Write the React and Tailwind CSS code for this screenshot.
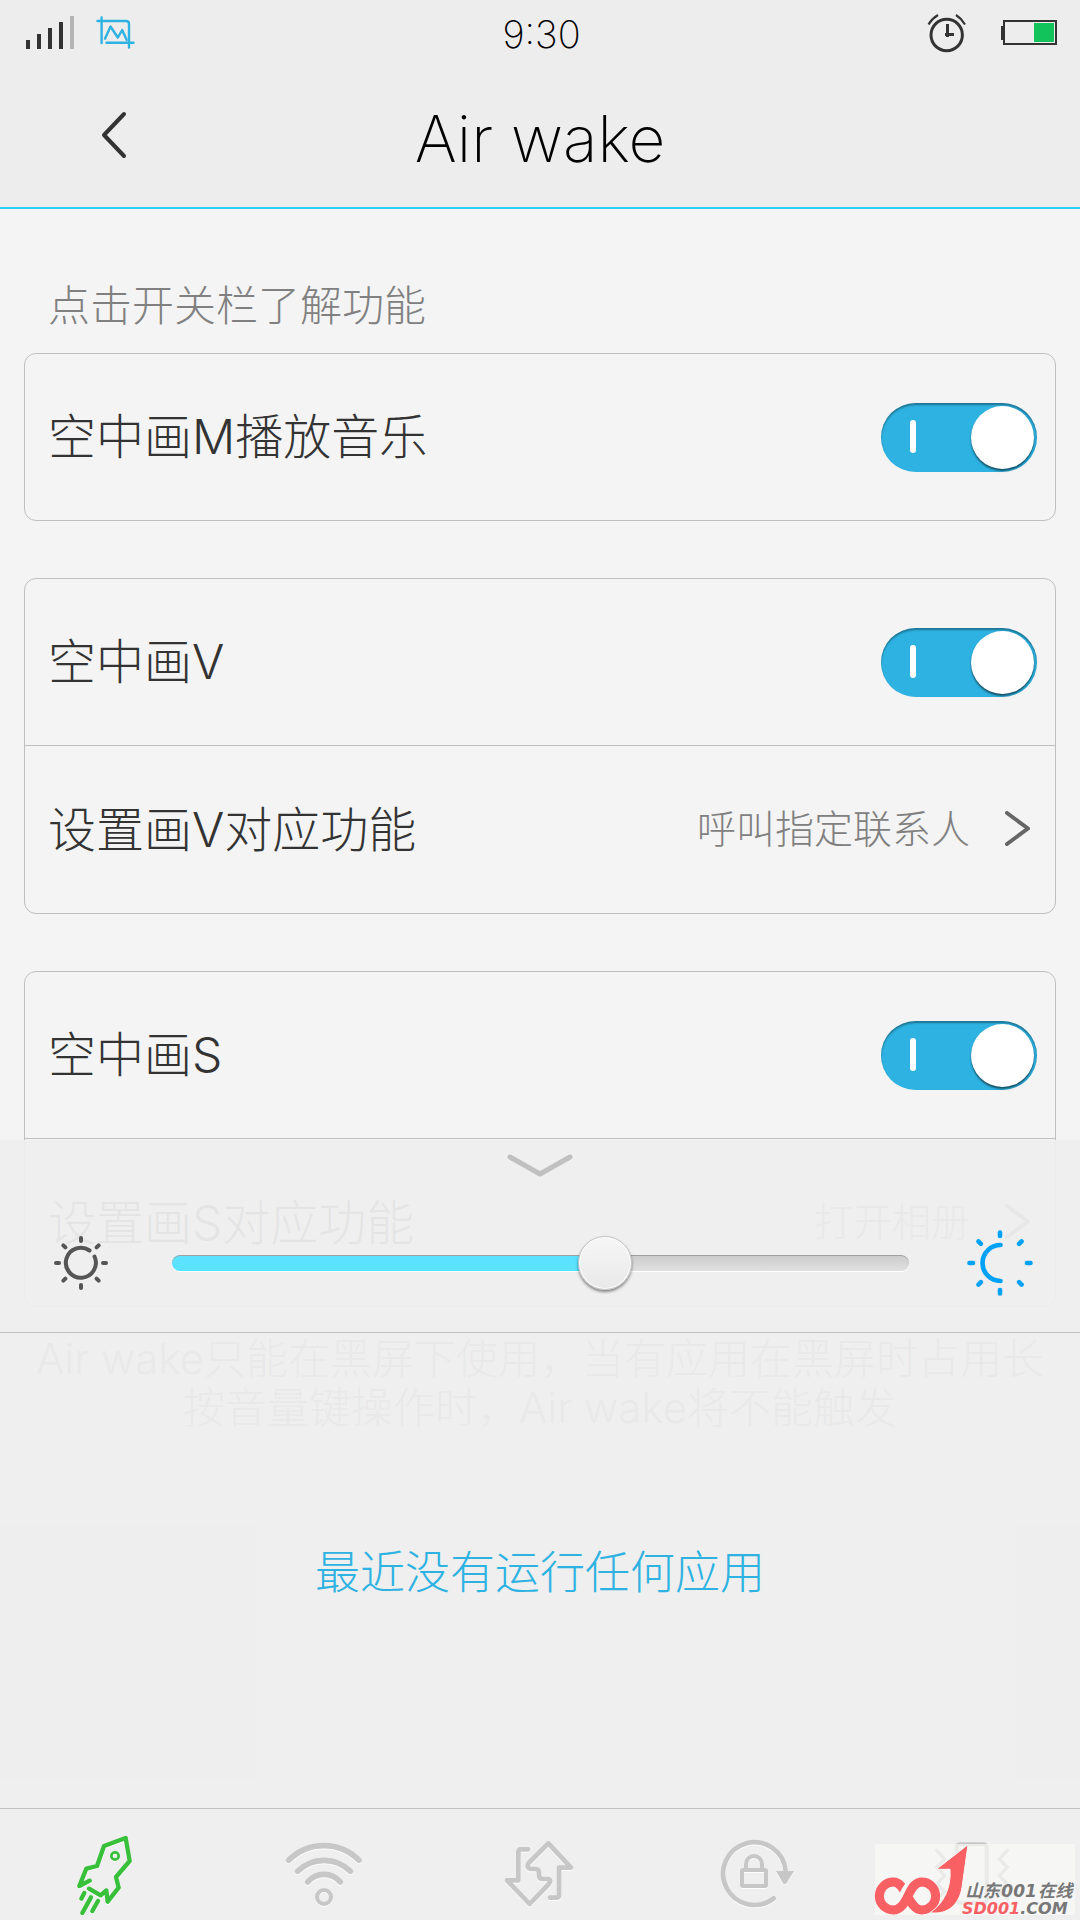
import { useState } from "react";

const cards = [
  [{ type: "switch", id: "draw-m", label: "空中画M播放音乐" }],
  [
    { type: "switch", id: "draw-v", label: "空中画V" },
    { type: "link", id: "set-v", label: "设置画V对应功能", value: "呼叫指定联系人" },
  ],
  [
    { type: "switch", id: "draw-s", label: "空中画S" },
    { type: "link", id: "set-s", label: "设置画S对应功能", value: "打开相册" },
  ],
];

function StatusBar() {
  return (
    <div className="grid h-[68px] grid-cols-3 items-center pl-[26px] pr-[23px]">
      <div className="flex items-center gap-[21px]">
        <svg width="48" height="36" viewBox="26 16 48 36" fill="#333333" aria-label="信号">
          <rect x="26" y="40" width="4" height="9" />
          <rect x="37" y="34" width="4" height="15" />
          <rect x="48" y="28" width="4" height="21" />
          <rect x="59" y="22" width="4" height="27" />
          <rect x="70" y="16" width="4" height="33" fill="#b4b4b4" />
        </svg>
        <svg
          width="42"
          height="36"
          viewBox="95 16 42 36"
          fill="none"
          stroke="#2db2e1"
          strokeWidth="2.4"
          strokeLinecap="round"
          strokeLinejoin="round"
          aria-label="截屏"
        >
          <path d="M101.6 17.5V43M97.5 21H126q3 0 3 3v23.5M106.5 42.7H133.5" />
          <path d="M105 38.7L110.5 26.5L117.8 37.5L122.2 30L126.7 40" />
        </svg>
      </div>

      <time className="text-center text-[38px] font-extralight leading-none text-black">9:30</time>

      <div className="flex items-center justify-end gap-[31px]">
        <svg
          width="44"
          height="42"
          viewBox="925 13 44 42"
          fill="none"
          stroke="#333333"
          aria-label="闹钟"
        >
          <circle cx="946.7" cy="35" r="15.7" strokeWidth="3" />
          <path d="M947.5 24V37M945 34.6H954" strokeWidth="3" />
          <path d="M928.5 24.5Q932 18.500 938 15M965 24.500Q961.500 18.500 956 15" strokeWidth="2.2" />
        </svg>
        <svg width="57" height="36" viewBox="1000 16 57 36" aria-label="电量">
          <rect x="1001" y="26" width="3" height="14" fill="#333333" />
          <rect x="1004" y="21" width="52" height="23" fill="none" stroke="#333333" strokeWidth="2" />
          <rect x="1034" y="23" width="20" height="19" fill="#12c25a" />
        </svg>
      </div>
    </div>
  );
}

function Switch({ id }) {
  const [on, setOn] = useState(true);

  return (
    <span className="relative block h-[69px] w-[156px]">
      <input
        type="checkbox"
        role="switch"
        id={id}
        checked={on}
        onChange={(e) => setOn(e.target.checked)}
        className="peer block h-full w-full cursor-pointer appearance-none rounded-full bg-[#b9b9b9] shadow-[inset_0_2px_2px_rgba(0,0,0,0.35)] checked:bg-[#2db2e1]"
      />
      <span className="pointer-events-none absolute left-[29px] top-[17px] h-[33px] w-1.5 rounded-full bg-white" />
      <span className="pointer-events-none absolute left-[3px] top-[3px] size-[63px] rounded-full bg-white shadow-[0_2px_2px_rgba(0,0,0,0.55)] peer-checked:left-[90px]" />
    </span>
  );
}

function Row({ item }) {
  if (item.type === "switch") {
    return (
      <label
        htmlFor={item.id}
        className="box-content flex h-[166px] cursor-pointer items-center justify-between pl-[23px] pr-[18px]"
      >
        <span className="text-5xl text-[#333333]">{item.label}</span>
        <Switch id={item.id} />
      </label>
    );
  }

  return (
    <button
      type="button"
      className="flex h-[167px] w-full cursor-pointer items-center pl-[23px] pr-[25px] text-left"
    >
      <span className="grow text-5xl text-[#333333]">{item.label}</span>
      <span className="text-[39px] text-[#808080]">{item.value}</span>
      <svg
        width="28"
        height="38"
        viewBox="0 0 28 38"
        fill="none"
        stroke="#666666"
        strokeWidth="4"
        strokeLinecap="round"
        strokeLinejoin="round"
        className="ml-8"
      >
        <path d="M5 2L26 17.500L5 33" />
      </svg>
    </button>
  );
}

// Eight short rays round a centre at 0,0
function Rays({ from, to }) {
  return [0, 45, 90, 135, 180, 225, 270, 315].map((deg) => (
    <path key={deg} d={`M0 ${-from}V${-to}`} transform={`rotate(${deg})`} />
  ));
}

function Brightness() {
  const [value, setValue] = useState(595);
  // the thumb is 54px wide, its centre never reaches the ends of the track
  const ratio = value / 1000;
  const fill = `calc(27px + (100% - 54px) * ${ratio})`;

  return (
    <div className="flex grow items-center pl-[53px] pr-[46px] pt-4">
      <svg
        width="56"
        height="56"
        viewBox="-28 -28 56 56"
        fill="none"
        stroke="#555555"
        strokeWidth="4"
        strokeLinecap="round"
        className="shrink-0"
      >
        <path d="M8.500 -12.500A15 15 0 1 0 13.500 -6.500" />
        <Rays from={22} to={25} />
      </svg>
      <input
        type="range"
        min="0"
        max="1000"
        value={value}
        aria-label="亮度"
        onChange={(e) => setValue(Number(e.target.value))}
        style={{ "--fill": fill }}
        className="ml-[63px] mr-[57px] h-[54px] min-w-0 grow cursor-pointer appearance-none bg-transparent [&::-webkit-slider-runnable-track]:h-4 [&::-webkit-slider-runnable-track]:rounded-full [&::-webkit-slider-runnable-track]:bg-[linear-gradient(to_right,#5ae2ff_var(--fill),transparent_var(--fill)),linear-gradient(#cbcbcb,#e0e0e0)] [&::-webkit-slider-runnable-track]:shadow-[inset_0_1px_0_#a0a0a0,0_1px_0_#ffffff] [&::-webkit-slider-thumb]:-mt-[19px] [&::-webkit-slider-thumb]:size-[54px] [&::-webkit-slider-thumb]:appearance-none [&::-webkit-slider-thumb]:rounded-full [&::-webkit-slider-thumb]:border [&::-webkit-slider-thumb]:border-[#c4c4c4] [&::-webkit-slider-thumb]:bg-linear-to-b [&::-webkit-slider-thumb]:from-[#f6f6f6] [&::-webkit-slider-thumb]:to-[#e9e9e9] [&::-webkit-slider-thumb]:shadow-[inset_0_0_0_1px_#ffffff,0_2px_3px_rgba(0,0,0,0.45)]"
      />
      <svg
        width="68"
        height="68"
        viewBox="-34 -34 68 68"
        fill="none"
        stroke="#00a2f5"
        strokeWidth="4.6"
        strokeLinecap="round"
        className="shrink-0"
      >
        <path d="M0.500 -18A18 18 0 0 0 0.500 18" />
        <Rays from={27} to={30.5} />
      </svg>
    </div>
  );
}

function NavButton({ label, viewBox, children }) {
  return (
    <button
      type="button"
      aria-label={label}
      className="flex cursor-pointer items-center justify-center pt-5"
    >
      <svg
        width="80"
        height="84"
        viewBox={viewBox}
        fill="none"
        stroke="#c7c7c7"
        strokeWidth="13"
        strokeLinecap="round"
        strokeLinejoin="round"
        className="drop-shadow-[0_1px_0_rgba(255,255,255,0.9)]"
      >
        {children}
      </svg>
    </button>
  );
}

function BottomNav() {
  return (
    <nav className="grid h-28 grid-cols-5 border-t border-[#c0c0c0]">
      <NavButton label="一键加速" viewBox="84 99 240 252">
        <g stroke="#38c03a">
          <path d="M149 242L118 258L139 206L171 198L192 138L257 114L269 183L228 231L236 263L203 305L199 271L182 286L147 266" />
          <circle cx="225" cy="168" r="11" strokeWidth="8" />
          <path d="M133 279L124 296M153 292L127 339M174 303L157 333" />
        </g>
      </NavButton>
      <NavButton label="无线网络" viewBox="732 99 240 252">
        <path
          strokeWidth="17"
          d="M746 181A148 148 0 0 1 957 181M773 214A111 111 0 0 1 931 214M803 246A64 64 0 0 1 901 246"
        />
        <circle cx="852" cy="291" r="21" strokeWidth="12" />
      </NavButton>
      <NavButton label="数据网络" viewBox="120 99 240 252">
        <path
          strokeWidth="14"
          d="M204 148H184Q175 148 175 157V241H141L209 312L265 254Q277 238 262 237H248Q237 237 237 226V218Q237 207 226 207H212Q198 204 206 189L265 130L333 203H297V285Q297 293 289 293H270"
        />
      </NavButton>
      <NavButton label="旋转锁定" viewBox="768 99 240 252">
        <path strokeWidth="14" d="M977 213A94 94 0 1 0 941 295" />
        <path d="M948 213H1002L979 250Q974 256 969 250Z" fill="#c7c7c7" stroke="none" />
        <rect x="846" y="210" width="72" height="48" rx="2" strokeWidth="12" />
        <path strokeWidth="12" d="M858 208V192A24 24 0 0 1 906 192V208" />
      </NavButton>
      <NavButton label="振动" viewBox="276 99 240 252">
        <rect x="350" y="133" width="90" height="176" rx="10" />
        <path
          strokeWidth="11"
          d="M502 152L478 178L502 202L478 228L502 252L478 276L502 296M290 152L314 178L290 202L314 228L290 252L314 276L290 296"
        />
      </NavButton>
    </nav>
  );
}

function SiteMark() {
  return (
    <svg
      width="200"
      height="71"
      viewBox="105 132 600 213"
      className="pointer-events-none absolute bottom-[5px] right-[5px] overflow-visible bg-[#f9faf8]/70"
    >
      <g fill="none" stroke="#f96063" strokeWidth="27">
        <path d="M160 330A42 42 0 0 1 160 246C200 246 205 330 245 330A42 42 0 0 0 245 246" />
        <path d="M216 256C190 276 196 300 176 326" stroke="#f7f8f6" strokeWidth="34" />
        <path d="M246 246C202 246 206 330 159 330" />
      </g>
      <path
        d="M384 134L289 208H330C334 262 312 310 270 338C324 346 358 312 366 262Z"
        fill="#f96063"
        stroke="#f7f8f6"
        strokeWidth="3"
      />
      <g fontStyle="italic" fontWeight="700" fill="#777777">
        <text x="376" y="290" fontSize="52" fontFamily="'Noto Sans CJK SC', sans-serif">
          山东
        </text>
        <text x="484" y="290" fontSize="51" fontFamily="'DejaVu Sans', sans-serif">
          001
        </text>
        <text x="594" y="290" fontSize="52" fontFamily="'Noto Sans CJK SC', sans-serif">
          在线
        </text>
        <text x="366" y="341" fontSize="48" fontFamily="'DejaVu Sans', sans-serif">
          <tspan fill="#f96063">SD001</tspan>.COM
        </text>
      </g>
    </svg>
  );
}

function ControlPanel() {
  return (
    <section className="absolute inset-x-0 bottom-0 bg-[#eeeeee]/95">
      <div className="flex h-[193px] flex-col border-b border-[#c0c0c0]">
        <button type="button" aria-label="收起" className="cursor-pointer self-center pt-3.5">
          <svg
            width="68"
            height="24"
            viewBox="0 0 68 24"
            fill="none"
            stroke="#c0c0c0"
            strokeWidth="5"
            strokeLinecap="round"
            strokeLinejoin="round"
          >
            <path d="M4 3L34 20L64 3" />
          </svg>
        </button>
        <Brightness />
      </div>

      <div className="flex h-[475px] items-center justify-center pt-1">
        <p className="text-[45px] text-[#2db2e1]">最近没有运行任何应用</p>
      </div>

      <BottomNav />
      <SiteMark />
    </section>
  );
}

function App() {
  return (
    <div className="relative min-h-screen overflow-hidden bg-[#f4f4f4] font-['Inter','Noto_Sans_CJK_SC',sans-serif] font-light">
      <header className="border-b-2 border-[#2bd0f5] bg-[#ededed]">
        <StatusBar />
        <div className="grid h-[139px] grid-cols-[1fr_auto_1fr] items-center">
          <button type="button" aria-label="返回" className="cursor-pointer justify-self-start pb-1 pl-[100px]">
            <svg
              width="28"
              height="50"
              viewBox="0 0 28 50"
              fill="none"
              stroke="#333333"
              strokeWidth="4"
              strokeLinecap="round"
              strokeLinejoin="round"
            >
              <path d="M24 3L4 24L24 45" />
            </svg>
          </button>
          <h1 className="pt-0.5 text-[64px] font-extralight text-black">Air wake</h1>
        </div>
      </header>

      <main className="px-6 pt-[66px]">
        <p className="mb-4 px-6 text-[42px] leading-[62px] text-[#808080]">
          点击开关栏了解功能
        </p>

        <div className="flex flex-col gap-[57px]">
          {cards.map((rows) => (
            <div
              key={rows[0].id}
              className="divide-y divide-[#c0c0c0] rounded-xl border border-[#c0c0c0]"
            >
              {rows.map((item) => (
                <Row key={item.id} item={item} />
              ))}
            </div>
          ))}
        </div>

        <p className="mt-[27px] text-center text-[42px] leading-[49px] text-[#808080]">
          Air wake只能在黑屏下使用，当有应用在黑屏时占用长
          <br />
          按音量键操作时，Air wake将不能触发
        </p>
      </main>

      <ControlPanel />
    </div>
  );
}

export default App;
